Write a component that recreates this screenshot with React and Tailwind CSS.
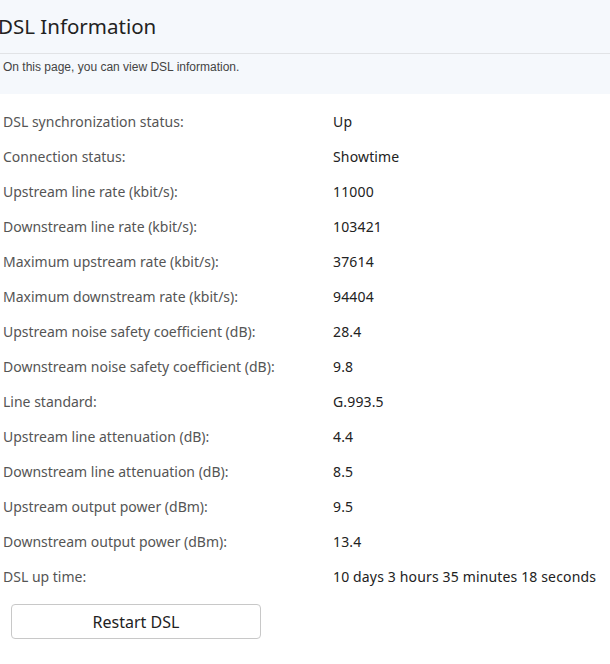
export default function App() {
  const rows = [
    ["DSL synchronization status:", "Up"],
    ["Connection status:", "Showtime"],
    ["Upstream line rate (kbit/s):", "11000"],
    ["Downstream line rate (kbit/s):", "103421"],
    ["Maximum upstream rate (kbit/s):", "37614"],
    ["Maximum downstream rate (kbit/s):", "94404"],
    ["Upstream noise safety coefficient (dB):", "28.4"],
    ["Downstream noise safety coefficient (dB):", "9.8"],
    ["Line standard:", "G.993.5"],
    ["Upstream line attenuation (dB):", "4.4"],
    ["Downstream line attenuation (dB):", "8.5"],
    ["Upstream output power (dBm):", "9.5"],
    ["Downstream output power (dBm):", "13.4"],
    ["DSL up time:", "10 days 3 hours 35 minutes 18 seconds"],
  ];
  return (
    <div className="w-[610px] h-[664px] bg-white overflow-hidden" style={{ fontFamily: '"Noto Sans", "Open Sans", sans-serif' }}>
      <div className="bg-[#f5f8fc] h-[94px]">
        <div className="h-[54px] border-b border-[#e1e3e6] flex items-center">
          <h1 className="ml-[-2px] text-[20.5px] text-[#222] font-normal leading-none">DSL Information</h1>
        </div>
        <div className="pl-[3px] pt-[6px] text-[12px] text-[#444] leading-[14px]" style={{ fontFamily: '"Liberation Sans", Arial, sans-serif' }}>
          On this page, you can view DSL information.
        </div>
      </div>
      <div className="pt-[10px]">
        {rows.map(([l, v]) => (
          <div key={l} className="h-[35px] flex items-center text-[14px]">
            <div className="w-[333px] pl-[3px] text-[#555]">{l}</div>
            <div className="text-[#222] tracking-[0.15px]">{v}</div>
          </div>
        ))}
      </div>
      <div className="pt-[10px] pl-[11px]">
        <button className="w-[250px] h-[35px] border border-[#c8c8c8] rounded-[4px] bg-white text-[16px] text-[#222] flex items-center justify-center">
          Restart DSL
        </button>
      </div>
    </div>
  );
}
